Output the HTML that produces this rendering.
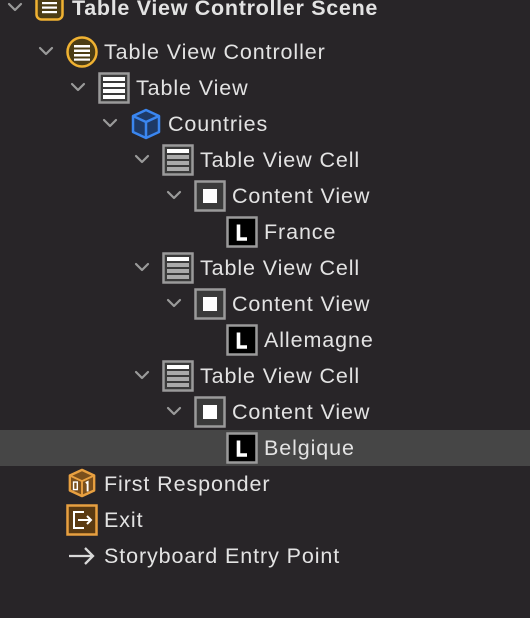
<!DOCTYPE html><html><head><style>
body{margin:0;width:530px;height:618px;background:#282528;overflow:hidden;font-family:"Liberation Sans",sans-serif;color:#e3e3e3;font-size:21.5px;position:relative}
.r{position:absolute;left:0;width:530px;height:36px}
.sel{background:#464646}
.t{position:absolute;top:6px;white-space:nowrap;letter-spacing:0.9px}
.ch{position:absolute;top:12px;width:16px;height:10px}
.ic{position:absolute;top:2px;width:32px;height:32px}
</style></head><body>
<svg width="0" height="0" style="position:absolute"><defs>
<symbol id="chev" viewBox="0 0 16 10"><path d="M2 2 L8 8 L14 2" fill="none" stroke="#9a9a9a" stroke-width="2.2" stroke-linecap="round" stroke-linejoin="round"/></symbol>
<symbol id="tv" viewBox="0 0 32 32"><rect x="1.5" y="1.5" width="29" height="29" fill="#3a3a3a" stroke="#9a9a9a" stroke-width="2.5"/><rect x="5" y="5" width="22" height="4" fill="#fff"/><rect x="5" y="11" width="22" height="4" fill="#fff"/><rect x="5" y="17" width="22" height="4" fill="#fff"/><rect x="5" y="23" width="22" height="4" fill="#fff"/></symbol>
<symbol id="cell" viewBox="0 0 32 32"><rect x="1.5" y="1.5" width="29" height="29" fill="#3a3a3a" stroke="#9a9a9a" stroke-width="2.5"/><rect x="5" y="5" width="22" height="4" fill="#fff"/><rect x="5" y="11" width="22" height="4" fill="#aaa"/><rect x="5" y="17" width="22" height="4" fill="#aaa"/><rect x="5" y="23" width="22" height="4" fill="#aaa"/></symbol>
<symbol id="cv" viewBox="0 0 32 32"><rect x="1.5" y="1.5" width="29" height="29" fill="#3a3a3a" stroke="#9a9a9a" stroke-width="2.5"/><rect x="9" y="9" width="14" height="14" fill="#fff"/></symbol>
<symbol id="lab" viewBox="0 0 32 32"><rect x="1.5" y="1.5" width="29" height="29" fill="#000" stroke="#9a9a9a" stroke-width="2.5"/><path d="M12.5 8.5 V23 H21" fill="none" stroke="#fff" stroke-width="3.6"/></symbol>
</defs></svg>

<div class="r" style="top:-10px"><svg class="ch" style="left:7px"><use href="#chev"/></svg>
<svg class="ic" style="left:35px;top:-1px;width:29px;height:32px" viewBox="0 0 29 32"><rect x="1.5" y="1.5" width="26" height="29" rx="5" fill="#4c3d15" stroke="#f0b232" stroke-width="2.5"/><rect x="7" y="13" width="15" height="2.2" fill="#fff"/><rect x="7" y="17.5" width="15" height="2.2" fill="#fff"/><rect x="7" y="22" width="15" height="2.2" fill="#fff"/></svg>
<span class="t" style="left:72px;font-weight:bold;letter-spacing:0.7px">Table View Controller Scene</span></div>

<div class="r" style="top:34px"><svg class="ch" style="left:38px"><use href="#chev"/></svg>
<svg class="ic" style="left:66px" viewBox="0 0 32 32"><circle cx="16" cy="16" r="14.5" fill="#4c3d15" stroke="#f0b232" stroke-width="2.5"/><rect x="8" y="9" width="16" height="2.5" fill="#fff"/><rect x="8" y="13.5" width="16" height="2.5" fill="#fff"/><rect x="8" y="18" width="16" height="2.5" fill="#fff"/><rect x="8" y="22.5" width="16" height="2.2" fill="#fff"/></svg>
<span class="t" style="left:104px">Table View Controller</span></div>

<div class="r" style="top:70px"><svg class="ch" style="left:70px"><use href="#chev"/></svg><svg class="ic" style="left:98px"><use href="#tv"/></svg><span class="t" style="left:136px">Table View</span></div>

<div class="r" style="top:106px"><svg class="ch" style="left:102px"><use href="#chev"/></svg>
<svg class="ic" style="left:130px" viewBox="0 0 32 32"><path d="M16 2 L29 8 V24 L16 30 L3 24 V8 Z" fill="#1e3a66" stroke="#3a86f0" stroke-width="2.5" stroke-linejoin="round"/><path d="M3 8 L16 14 L29 8 M16 14 V30" fill="none" stroke="#3a86f0" stroke-width="2.5"/></svg>
<span class="t" style="left:168px">Countries</span></div>

<div class="r" style="top:142px"><svg class="ch" style="left:134px"><use href="#chev"/></svg><svg class="ic" style="left:162px"><use href="#cell"/></svg><span class="t" style="left:200px">Table View Cell</span></div>
<div class="r" style="top:178px"><svg class="ch" style="left:166px"><use href="#chev"/></svg><svg class="ic" style="left:194px"><use href="#cv"/></svg><span class="t" style="left:232px">Content View</span></div>
<div class="r" style="top:214px"><svg class="ic" style="left:226px"><use href="#lab"/></svg><span class="t" style="left:264px">France</span></div>

<div class="r" style="top:250px"><svg class="ch" style="left:134px"><use href="#chev"/></svg><svg class="ic" style="left:162px"><use href="#cell"/></svg><span class="t" style="left:200px">Table View Cell</span></div>
<div class="r" style="top:286px"><svg class="ch" style="left:166px"><use href="#chev"/></svg><svg class="ic" style="left:194px"><use href="#cv"/></svg><span class="t" style="left:232px">Content View</span></div>
<div class="r" style="top:322px"><svg class="ic" style="left:226px"><use href="#lab"/></svg><span class="t" style="left:264px">Allemagne</span></div>

<div class="r" style="top:358px"><svg class="ch" style="left:134px"><use href="#chev"/></svg><svg class="ic" style="left:162px"><use href="#cell"/></svg><span class="t" style="left:200px">Table View Cell</span></div>
<div class="r" style="top:394px"><svg class="ch" style="left:166px"><use href="#chev"/></svg><svg class="ic" style="left:194px"><use href="#cv"/></svg><span class="t" style="left:232px">Content View</span></div>
<div class="r sel" style="top:430px"><svg class="ic" style="left:226px"><use href="#lab"/></svg><span class="t" style="left:264px">Belgique</span></div>

<div class="r" style="top:466px">
<svg class="ic" style="left:67px;width:30px;height:30px" viewBox="0 0 32 32"><path d="M16 2 L29 8 V24 L16 30 L3 24 V8 Z" fill="#7a4f1c" stroke="#e8a040" stroke-width="2.5" stroke-linejoin="round"/><path d="M3 8 L16 14 L29 8 M16 14 V30" fill="none" stroke="#e8a040" stroke-width="2"/><rect x="7" y="15" width="4" height="8" fill="none" stroke="#fff" stroke-width="1.5"/><path d="M20 16 L22 15 V25" fill="none" stroke="#fff" stroke-width="2"/></svg>
<span class="t" style="left:104px">First Responder</span></div>
<div class="r" style="top:502px">
<svg class="ic" style="left:66px" viewBox="0 0 32 32"><rect x="1.5" y="1.5" width="29" height="29" fill="#5a3a12" stroke="#e8a040" stroke-width="2.5"/><path d="M18 8 H8 V24 H18 M12 16 H25 M21 12 L25 16 L21 20" fill="none" stroke="#fff" stroke-width="2"/></svg>
<span class="t" style="left:104px">Exit</span></div>
<div class="r" style="top:538px">
<svg class="ic" style="left:66px" viewBox="0 0 32 32"><path d="M3 16 H27 M19 8 L27 16 L19 24" fill="none" stroke="#d8d8d8" stroke-width="2.3"/></svg>
<span class="t" style="left:104px">Storyboard Entry Point</span></div>
</body></html>
